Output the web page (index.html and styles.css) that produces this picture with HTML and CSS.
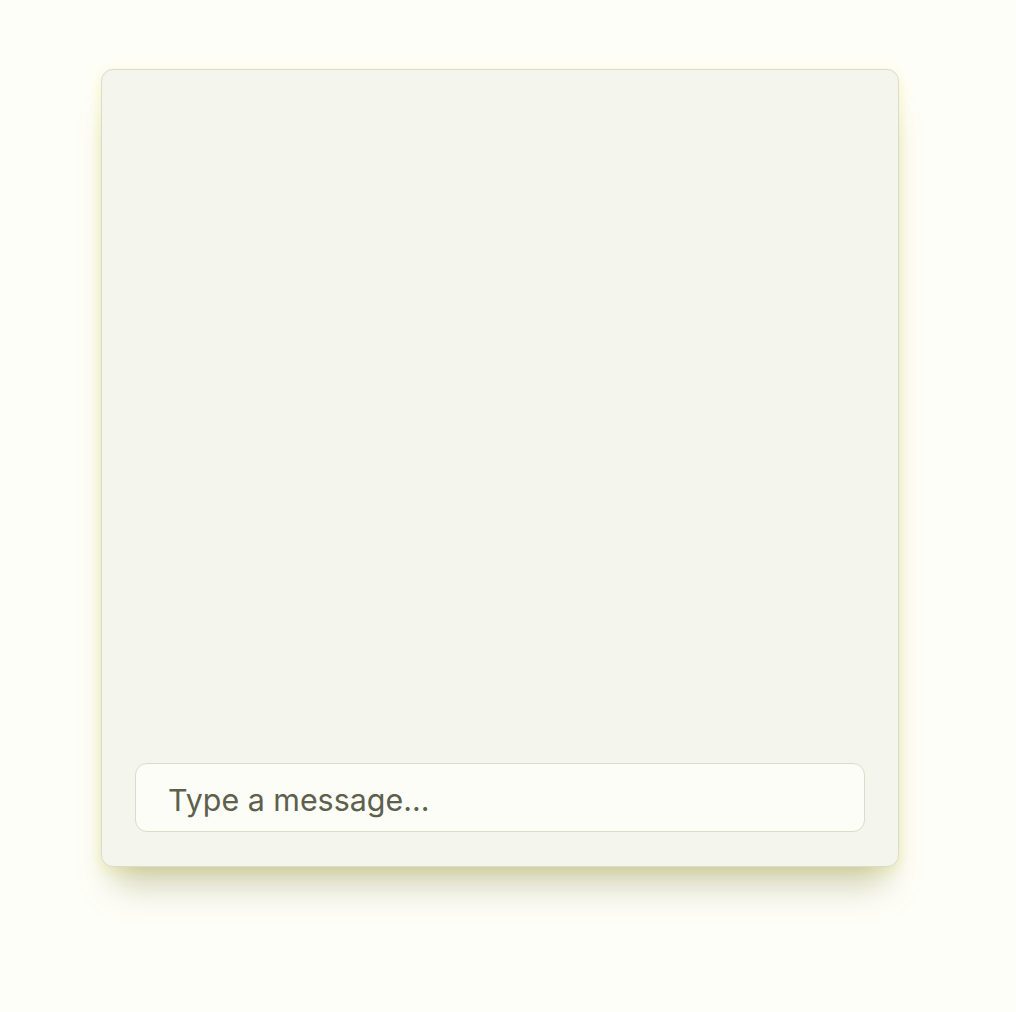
FILE: index.html
```html
<!DOCTYPE html>
<html lang="en">
<head>
<meta charset="utf-8">
<title>Chat</title>
<link rel="stylesheet" href="styles.css">
</head>
<body>
<main class="page">
  <section class="chat">
    <div class="messages"></div>
    <input class="composer" type="text" placeholder="Type a message...">
  </section>
</main>
</body>
</html>
```
FILE: styles.css
```css
html, body {
  margin: 0;
  padding: 0;
  background: #fefef8;
}
.page {
  padding: 69px 0 120px 101px;
  font-family: Inter, "Noto Sans", sans-serif;
}
.chat {
  box-sizing: border-box;
  width: 798px;
  height: 798px;
  background: #f4f5ec;
  border: 1px solid #dadcca;
  border-radius: 12px;
  padding: 32px 33px 34px 33px;
  display: flex;
  flex-direction: column;
  box-shadow: 0 32px 32px -14px rgba(140, 140, 80, 0.4), 0 4px 14px rgba(225, 225, 90, 0.35);
}
.messages {
  flex: 1;
}
.composer {
  box-sizing: border-box;
  width: 100%;
  height: 69px;
  border: 1px solid #d9dcc6;
  border-radius: 12px;
  background: #fdfdf8;
  padding: 4px 32px 0 32px;
  font-family: Inter, "Noto Sans", sans-serif;
  font-size: 30.4px;
  color: #3a3d30;
  outline: none;
}
.composer::placeholder {
  color: #5c604c;
  opacity: 1;
}
```
